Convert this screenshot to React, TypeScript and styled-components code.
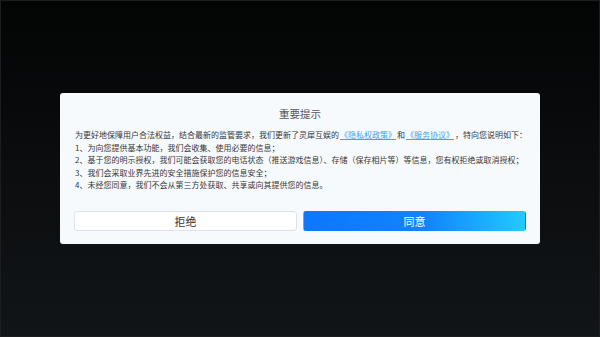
import React from "react";
import styled, { createGlobalStyle } from "styled-components";

const GlobalStyle = createGlobalStyle`
    html, body {
        margin: 0;
        padding: 0;
        height: 100%;
    }
    body {
        font-family: "Noto Sans CJK SC", "Noto Sans", sans-serif;
        background: linear-gradient(180deg, #030404 0%, #0a0c0d 45%, #121518 100%);
    }
    #root {
        height: 100%;
    }
`;

const Screen = styled.div`
    height: 100%;
    display: flex;
    align-items: center;
    justify-content: center;
    box-shadow: inset 0 0 0 1px #1c1d1e;
    box-sizing: border-box;
`;

const Dialog = styled.div`
    width: 480px;
    box-sizing: border-box;
    padding: 13px 14px 13px;
    background: #f6fafd;
    border-radius: 3px;
    display: flex;
    flex-direction: column;
`;

const Title = styled.div`
    font-size: 10.5px;
    line-height: 16px;
    color: #555;
    text-align: center;
    margin-bottom: 7px;
`;

const Body = styled.div`
    font-size: 8px;
    line-height: 12.5px;
    color: #383838;
    padding-left: 1px;
`;

const Line = styled.p`
    margin: 0;
    white-space: nowrap;
`;

const Link = styled.a`
    display: inline-block;
    padding: 0 1px;
    color: #3aa6ea;
    text-decoration: underline;
`;

const Actions = styled.div`
    margin-top: 19px;
    display: grid;
    grid-template-columns: 1fr 1fr;
    gap: 6px;
`;

const Button = styled.button<{ $primary?: boolean }>`
    height: 20px;
    padding: 0;
    border-radius: 3px;
    font-family: inherit;
    font-size: 11px;
    line-height: 18px;
    cursor: pointer;
    color: ${(p) => (p.$primary ? "#fff" : "#333")};
    border: 1px solid ${(p) => (p.$primary ? "transparent" : "#dfe3e8")};
    background: ${(p) =>
        p.$primary
            ? "linear-gradient(90deg, #0c77ff 0%, #1184ff 55%, #22caff 100%)"
            : "#fff"};
`;

const lines = [
    "1、为向您提供基本功能，我们会收集、使用必要的信息；",
    "2、基于您的明示授权，我们可能会获取您的电话状态（推送游戏信息）、存储（保存相片等）等信息，您有权拒绝或取消授权；",
    "3、我们会采取业界先进的安全措施保护您的信息安全；",
    "4、未经您同意，我们不会从第三方处获取、共享或向其提供您的信息。",
];

const App: React.FC = () => {
    return (
        <>
            <GlobalStyle />
            <Screen>
                <Dialog>
                    <Title>重要提示</Title>
                    <Body>
                        <Line>
                            为更好地保障用户合法权益，结合最新的监管要求，我们更新了灵犀互娱的
                            <Link>《隐私权政策》</Link>和<Link>《服务协议》</Link>，特向您说明如下：
                        </Line>
                        {lines.map((text, idx) => (
                            <Line key={idx}>{text}</Line>
                        ))}
                    </Body>
                    <Actions>
                        <Button>拒绝</Button>
                        <Button $primary>同意</Button>
                    </Actions>
                </Dialog>
            </Screen>
        </>
    );
};

export default App;
